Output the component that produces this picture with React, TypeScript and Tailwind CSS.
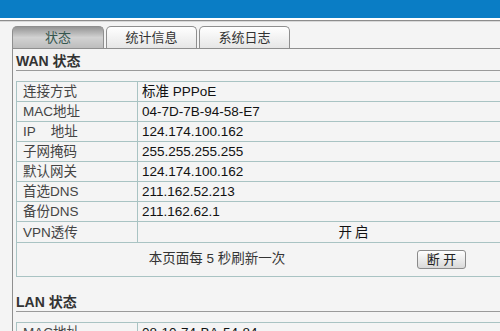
import { twMerge } from 'tailwind-merge';

const font = "font-['Liberation_Sans','Noto_Sans_CJK_SC',sans-serif]";

const wanRows = [
  { label: 'MAC地址', value: '04-7D-7B-94-58-E7' },
  { label: 'IP\u00a0\u00a0\u00a0\u00a0地址', value: '124.174.100.162' },
  { label: '子网掩码', value: '255.255.255.255' },
  { label: '默认网关', value: '124.174.100.162' },
  { label: '首选DNS', value: '211.162.52.213' },
  { label: '备份DNS', value: '211.162.62.1' },
];

const tabs = ['状态', '统计信息', '系统日志'];

const Row = ({ label, children }: { label: string; children: React.ReactNode }) => (
  <div className="flex h-[20px] border-b border-[#a9c3c3]">
    <div className="w-[121px] shrink-0 border-r border-[#a9c3c3] pl-[6px] leading-[20px] text-[#444]">
      {label}
    </div>
    <div className="flex-1 pl-[4px] leading-[20px] text-[#111]">{children}</div>
  </div>
);

const Heading = ({ text }: { text: string }) => (
  <div className="ml-[3px] border-b border-[#9a9a9a] pt-[4px] text-[14px] leading-[17px] font-bold text-[#333]">
    {text}
  </div>
);

const App = () => {
  return (
    <div className={twMerge('w-[500px] h-[331px] overflow-hidden bg-[#f4f4f4] text-[13.5px]', font)}>
      <div className="h-[18px] bg-[#0a7dc5]" />
      <div className="h-[2px] bg-white" />
      <div className="h-[1px] bg-[#8c8c8c]" />
      <div className="h-[1px] bg-[#d8d8d8]" />

      <div className="mt-[4px] flex gap-[2px] pl-[12px]">
        {tabs.map((t, i) => (
          <div
            key={t}
            className={twMerge(
              'flex h-[22px] items-center justify-center rounded-t-[5px] border border-b-0 border-[#8f8f8f] text-[13px]',
              i === 0
                ? 'w-[92px] bg-gradient-to-b from-[#959595] via-[#d2d2d2] to-[#bdbdbd] text-[#35574f]'
                : 'w-[91px] bg-gradient-to-b from-white to-[#e6e6e6] text-[#333]'
            )}
          >
            {t}
          </div>
        ))}
      </div>

      <div className="ml-[12px] w-[600px] border-t border-l border-[#8f8f8f]">
        <Heading text="WAN 状态" />

        <div className="mt-[10px] ml-[3px] border-t border-l border-[#a9c3c3]">
          <Row label="连接方式">标准 PPPoE</Row>
          {wanRows.map((r) => (
            <Row key={r.label} label={r.label}>
              {r.value}
            </Row>
          ))}
          <div className="flex h-[21px] border-b border-[#a9c3c3]">
            <div className="w-[121px] shrink-0 border-r border-[#a9c3c3] pl-[6px] leading-[21px] text-[#444]">
              VPN透传
            </div>
            <div className="flex-1 leading-[21px] text-[#111]">
              <div className="w-[434px] text-center tracking-[3px]">开启</div>
            </div>
          </div>
          <div className="flex h-[34px] items-center border-b border-[#a9c3c3]">
            <div className="w-[400px] text-center text-[#333]">本页面每 5 秒刷新一次</div>
            <button className="h-[19px] w-[49px] rounded-[3px] border border-[#8a8a8a] bg-gradient-to-b from-white to-[#d9d9d9] text-[13px] leading-[17px] text-[#222]">
              断 开
            </button>
          </div>
        </div>

        <div className="mt-[13px]">
          <Heading text="LAN 状态" />
        </div>

        <div className="mt-[10px] ml-[3px] border-t border-l border-[#a9c3c3]">
          <Row label="MAC地址">08-10-74-BA-54-84</Row>
          <Row label="IP地址">192.168.1.1</Row>
        </div>
      </div>
    </div>
  );
};

export default App;
